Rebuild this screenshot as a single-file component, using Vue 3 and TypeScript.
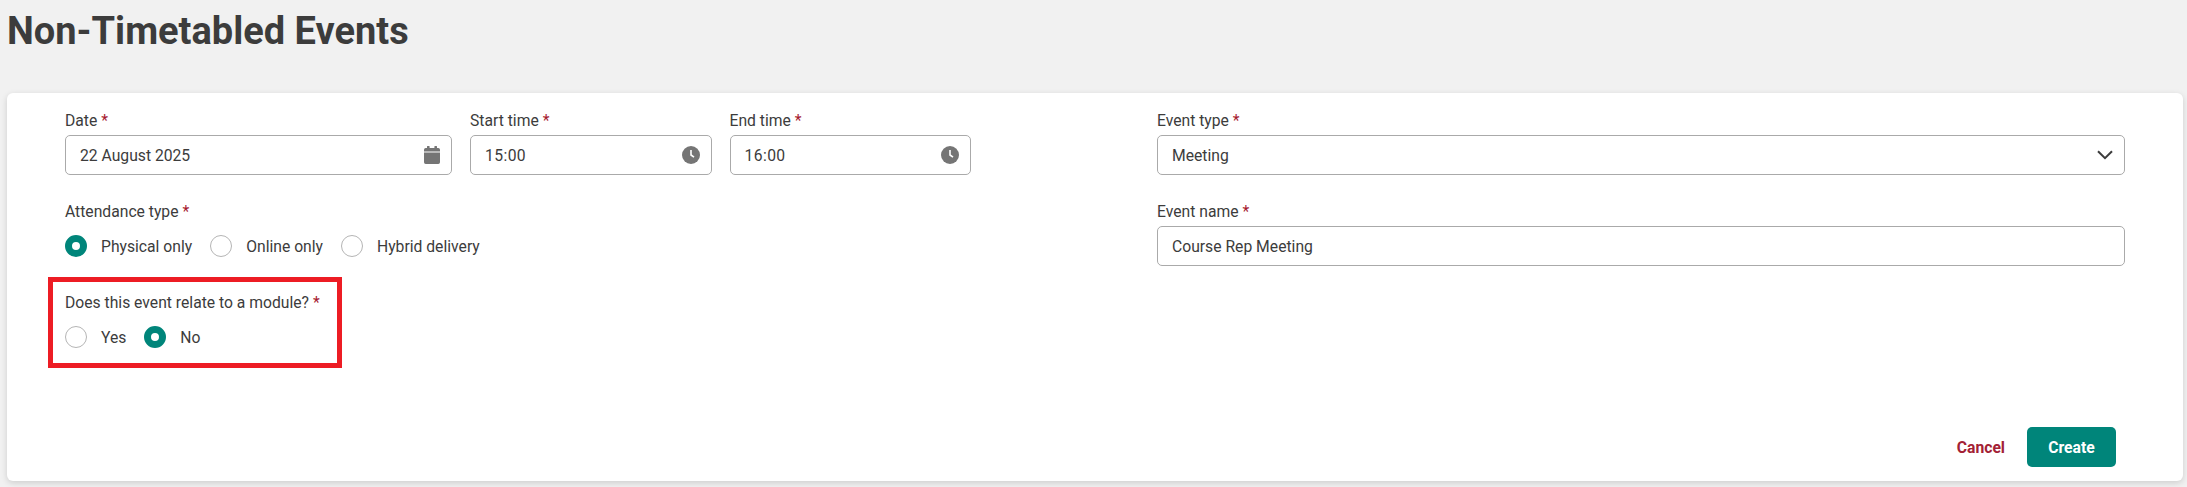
<script setup lang="ts">
const attendanceOptions = [
  { label: 'Physical only', checked: true },
  { label: 'Online only', checked: false },
  { label: 'Hybrid delivery', checked: false },
]

const moduleOptions = [
  { label: 'Yes', checked: false },
  { label: 'No', checked: true },
]
</script>

<template>
  <div class="page">
    <h1 class="title">Non-Timetabled Events</h1>

    <form class="card" @submit.prevent>
      <div class="columns">
        <div class="column">
          <div class="time-row">
            <div class="field date-field">
              <label class="label">Date <span class="req">*</span></label>
              <div class="input">
                <span>22 August 2025</span>
                <svg class="icon" width="16" height="18" viewBox="0 0 16 18">
                  <path
                    fill="#757575"
                    d="M3.5 0h1.6a.5.5 0 0 1 .5.5V2h4.8V.5a.5.5 0 0 1 .5-.5h1.600a.5.5 0 0 1 .5.5V2h1.300A1.700 1.700 0 0 1 16 3.700V5.500H0V3.700A1.700 1.700 0 0 1 1.700 2H3V.5a.5.5 0 0 1 .5-.5zM0 6.500h16v9.800a1.700 1.700 0 0 1-1.700 1.700H1.700A1.700 1.700 0 0 1 0 16.300z"
                  />
                </svg>
              </div>
            </div>
            <div class="field time-field">
              <label class="label">Start time <span class="req">*</span></label>
              <div class="input">
                <span class="time-value">15:00</span>
                <svg class="icon" width="18" height="18" viewBox="0 0 18 18">
                  <circle cx="9" cy="9" r="9" fill="#757575" />
                  <path d="M9 4v5l3 2.200" fill="none" stroke="#fff" stroke-width="1.600" />
                </svg>
              </div>
            </div>
            <div class="field time-field">
              <label class="label">End time <span class="req">*</span></label>
              <div class="input">
                <span class="time-value">16:00</span>
                <svg class="icon" width="18" height="18" viewBox="0 0 18 18">
                  <circle cx="9" cy="9" r="9" fill="#757575" />
                  <path d="M9 4v5l3 2.200" fill="none" stroke="#fff" stroke-width="1.600" />
                </svg>
              </div>
            </div>
          </div>

          <div class="group">
            <label class="label">Attendance type <span class="req">*</span></label>
            <div class="radios">
              <span v-for="opt in attendanceOptions" :key="opt.label" class="radio-item">
                <span class="radio" :class="{ 'radio--on': opt.checked }" />
                {{ opt.label }}
              </span>
            </div>
          </div>

          <div class="group group--module">
            <div class="highlight" />
            <label class="label">Does this event relate to a module? <span class="req">*</span></label>
            <div class="radios">
              <span v-for="opt in moduleOptions" :key="opt.label" class="radio-item">
                <span class="radio" :class="{ 'radio--on': opt.checked }" />
                {{ opt.label }}
              </span>
            </div>
          </div>
        </div>

        <div class="column">
          <div class="field">
            <label class="label">Event type <span class="req">*</span></label>
            <div class="input">
              <span>Meeting</span>
              <svg class="chevron" width="16" height="10" viewBox="0 0 16 10">
                <path d="M1 1.200l7 7 7-7" fill="none" stroke="#3c3c3c" stroke-width="2" />
              </svg>
            </div>
          </div>
          <div class="field name-field">
            <label class="label">Event name <span class="req">*</span></label>
            <div class="input">
              <span>Course Rep Meeting</span>
            </div>
          </div>
        </div>
      </div>

      <div class="actions">
        <a class="cancel">Cancel</a>
        <button class="create" type="submit">Create</button>
      </div>
    </form>
  </div>
</template>

<style>
html,
body {
  background: #f1f1f1;
}
</style>

<style scoped>
.page {
  height: 487px;
  padding: 0 4px 0 7px;
  box-sizing: border-box;
  overflow: hidden;
  background: #f1f1f1;
  font-family: Roboto, sans-serif;
  font-size: 15.7px;
  color: #3c3c3c;
}

.title {
  margin: 0;
  padding-top: 9px;
  height: 93px;
  box-sizing: border-box;
  font-size: 38px;
  line-height: 44px;
  font-weight: 700;
}

.card {
  height: 388px;
  box-sizing: border-box;
  padding: 17px 58px 14px 58px;
  background: #fff;
  border-radius: 6px;
  box-shadow: 0 2px 6px rgba(0, 0, 0, 0.15);
  display: flex;
  flex-direction: column;
}

.columns {
  display: grid;
  grid-template-columns: 968px 968px;
  column-gap: 124px;
  flex: 1;
}

.time-row {
  display: flex;
  gap: 18px;
}

.date-field {
  width: 387px;
}

.time-field {
  width: 241.500px;
}

.time-value {
  letter-spacing: 0.4px;
}

.label {
  display: block;
  height: 20px;
  line-height: 22px;
  margin-bottom: 5px;
}

.req {
  color: #a6192e;
}

.input {
  height: 40px;
  box-sizing: border-box;
  border: 1px solid #aaa;
  border-radius: 5px;
  padding: 0 11px 0 14px;
  display: flex;
  align-items: center;
  justify-content: space-between;
}

.name-field {
  margin-top: 26px;
}

.group {
  margin-top: 26px;
}

.group--module {
  position: relative;
  margin-top: 36px;
}

.group .label {
  margin-bottom: 14px;
}

.group--module .label {
  margin-bottom: 13px;
  line-height: 20px;
}

.highlight {
  position: absolute;
  left: -17px;
  top: -16px;
  width: 294px;
  height: 91px;
  box-sizing: border-box;
  border: 5px solid #ed1c24;
}

.radios {
  display: flex;
  gap: 18px;
}

.radio-item {
  display: flex;
  align-items: center;
  gap: 14px;
  height: 22px;
}

.radio {
  width: 22px;
  height: 22px;
  box-sizing: border-box;
  border: 1px solid #b5b5b5;
  border-radius: 50%;
  background: #fff;
}

.radio--on {
  border: 7px solid #00857a;
}

.actions {
  display: flex;
  align-items: center;
  justify-content: flex-end;
  gap: 22px;
  padding-right: 9px;
}

.cancel {
  color: #a32135;
  font-weight: 700;
}

.create {
  width: 89px;
  height: 40px;
  border: 0;
  border-radius: 5px;
  background: #00857a;
  color: #fff;
  font: 700 15.7px Roboto, sans-serif;
}
</style>
